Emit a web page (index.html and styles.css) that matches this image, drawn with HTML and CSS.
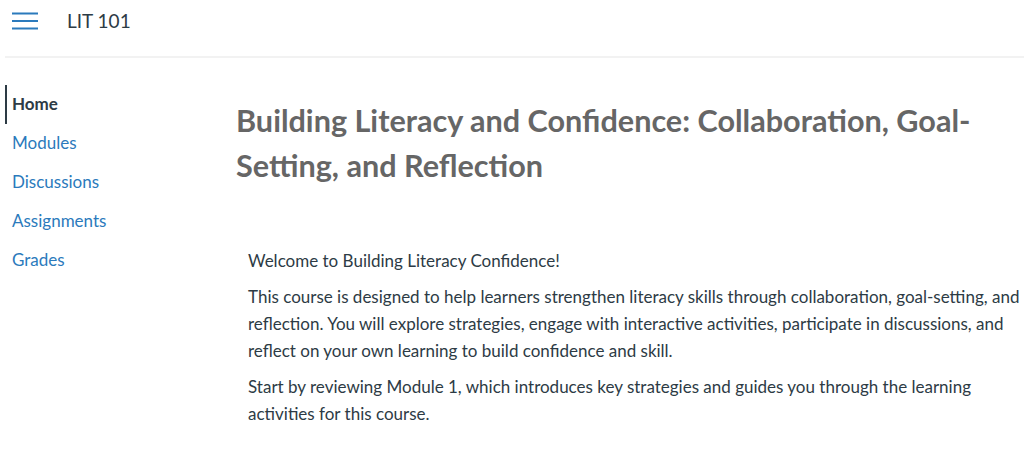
FILE: index.html
```html
<!DOCTYPE html>
<html lang="en">
<head>
<meta charset="utf-8">
<title>LIT 101</title>
<link rel="stylesheet" href="styles.css">
</head>
<body>
<header class="topbar">
  <button class="menu-btn" aria-label="Menu">
    <svg width="26" height="20" viewBox="0 0 26 20" aria-hidden="true">
      <rect x="0" y="2.5" width="26" height="2" fill="#2b7abc"/>
      <rect x="0" y="10" width="26" height="2" fill="#2b7abc"/>
      <rect x="0" y="17.5" width="26" height="2" fill="#2b7abc"/>
    </svg>
  </button>
  <span class="course">LIT 101</span>
</header>
<div class="layout">
  <nav class="sidenav">
    <a class="nav-item active" href="#">Home</a>
    <a class="nav-item" href="#">Modules</a>
    <a class="nav-item" href="#">Discussions</a>
    <a class="nav-item" href="#">Assignments</a>
    <a class="nav-item" href="#">Grades</a>
  </nav>
  <main class="content">
    <h1 class="title">Building Literacy and Confidence: Collaboration, Goal-Setting, and Reflection</h1>
    <div class="body">
      <p>Welcome to Building Literacy Confidence!</p>
      <p>This course is designed to help learners strengthen literacy skills through collaboration, goal-setting, and reflection. You will explore strategies, engage with interactive activities, participate in discussions, and reflect on your own learning to build confidence and skill.</p>
      <p>Start by reviewing Module 1, which introduces key strategies and guides you through the learning activities for this course.</p>
    </div>
  </main>
</div>
</body>
</html>
```

FILE: styles.css
```css
* { box-sizing: border-box; }
html, body { margin: 0; padding: 0; background: #fff; }
body {
  font-family: Lato, "Open Sans", sans-serif;
  color: #2d3b45;
  overflow: hidden;
}
.topbar {
  display: flex;
  align-items: center;
  height: 58px;
  margin-left: 5px;
  padding: 0 0 16px 7px;
  border-bottom: 2px solid #f2f2f2;
}
.menu-btn {
  background: none;
  border: 0;
  padding: 0;
  margin: 0;
  width: 26px;
  height: 20px;
  display: block;
}
.menu-btn svg { display: block; }
.course {
  margin-left: 29px;
  font-size: 19px;
  color: #2d3b45;
}
.layout {
  display: flex;
  padding-top: 27px;
}
.sidenav {
  width: 236px;
  flex: none;
  display: flex;
  flex-direction: column;
  padding-left: 5px;
}
.nav-item {
  display: block;
  font-size: 17px;
  line-height: 20px;
  padding: 9px 0 10px 5px;
  color: #2b7abc;
  text-decoration: none;
  border-left: 2px solid transparent;
}
.nav-item.active {
  color: #2d3b45;
  font-weight: 700;
  border-left-color: #2d3b45;
}
.content {
  flex: 1;
  min-width: 0;
}
.title {
  margin: 13px 0 0;
  font-size: 30.6px;
  line-height: 45px;
  font-weight: 700;
  color: #666;
}
.body {
  padding: 59px 0 0 12px;
  font-size: 17px;
  line-height: 27px;
}
.body p { margin: 0 0 9px; }
```
